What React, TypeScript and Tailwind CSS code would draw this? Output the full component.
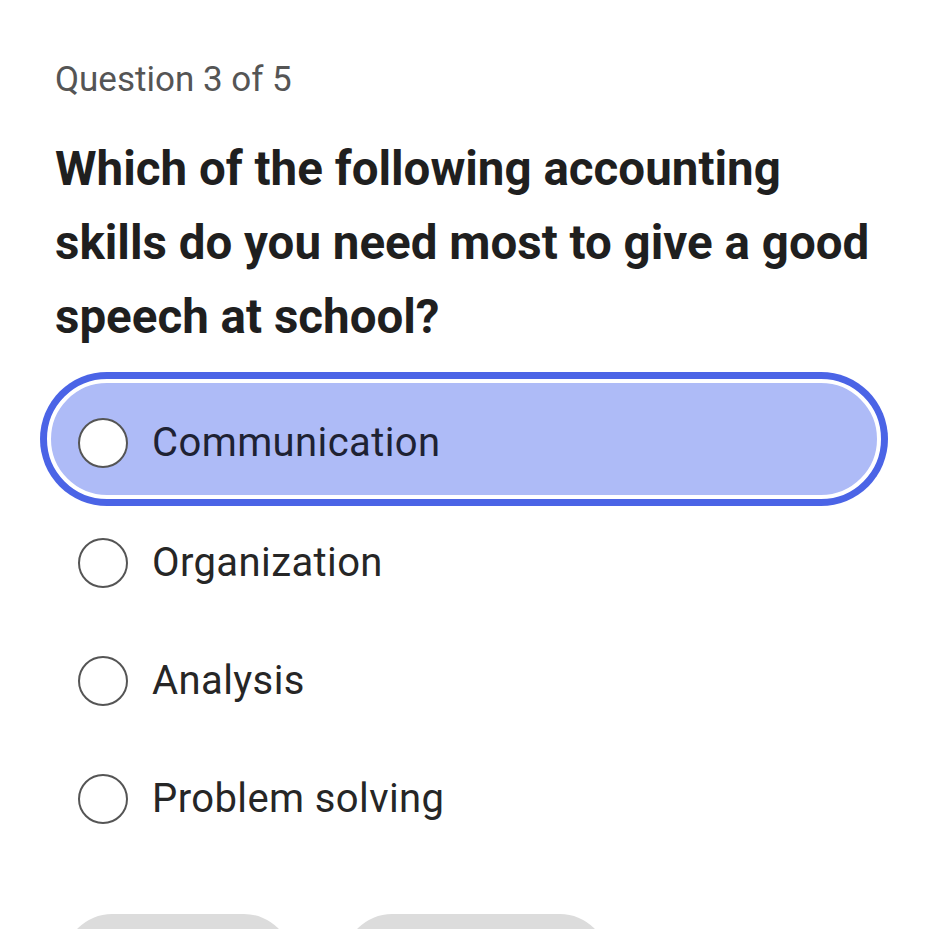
const options = ["Communication", "Organization", "Analysis", "Problem solving"];

function Option({ label, selected }: { label: string; selected: boolean }) {
  return (
    <div
      className={
        selected
          ? "flex h-[120px] w-[834px] items-center gap-[24px] rounded-full border-[4px] border-white bg-[#aebbf7] pl-[27px] pt-[8px] ring-[7px] ring-[#4b64e6]"
          : "flex h-[118px] w-[834px] items-center gap-[24px] border-[4px] border-transparent pl-[27px]"
      }
    >
      <span className="h-[50px] w-[50px] shrink-0 rounded-full border-[2px] border-[#555555] bg-white" />
      <span
        className={
          selected
            ? "text-[40px] leading-[48px] tracking-[0.4px] text-[#1e2233]"
            : "text-[40px] leading-[48px] tracking-[0.4px] text-[#262626]"
        }
      >
        {label}
      </span>
    </div>
  );
}

export default function App() {
  return (
    <div className="h-[929px] w-[948px] overflow-hidden bg-white font-['Roboto','Liberation_Sans',sans-serif]">
      <p className="ml-[55px] mt-[59px] text-[35px] leading-[42px] text-[#555555]">Question 3 of 5</p>

      <h1 className="ml-[55px] mt-[31px] w-[830px] text-[47.5px] font-bold leading-[74px] text-[#1f1f1f]">
        Which of the following accounting skills do you need most to give a good speech at school?
      </h1>

      {/* Answers */}
      <div className="ml-[47px] mt-[25px] flex flex-col">
        <Option label={options[0]} selected />
        <div className="h-[5px]" />
        {options.slice(1).map((o) => (
          <Option key={o} label={o} selected={false} />
        ))}
      </div>

      {/* Footer buttons, cut off by the viewport */}
      <div className="ml-[64px] mt-[56px] flex gap-[52px]">
        <div className="h-[80px] w-[228px] rounded-t-[48px] bg-[#dcdcdc]" />
        <div className="h-[80px] w-[264px] rounded-t-[48px] bg-[#dcdcdc]" />
      </div>
    </div>
  );
}
